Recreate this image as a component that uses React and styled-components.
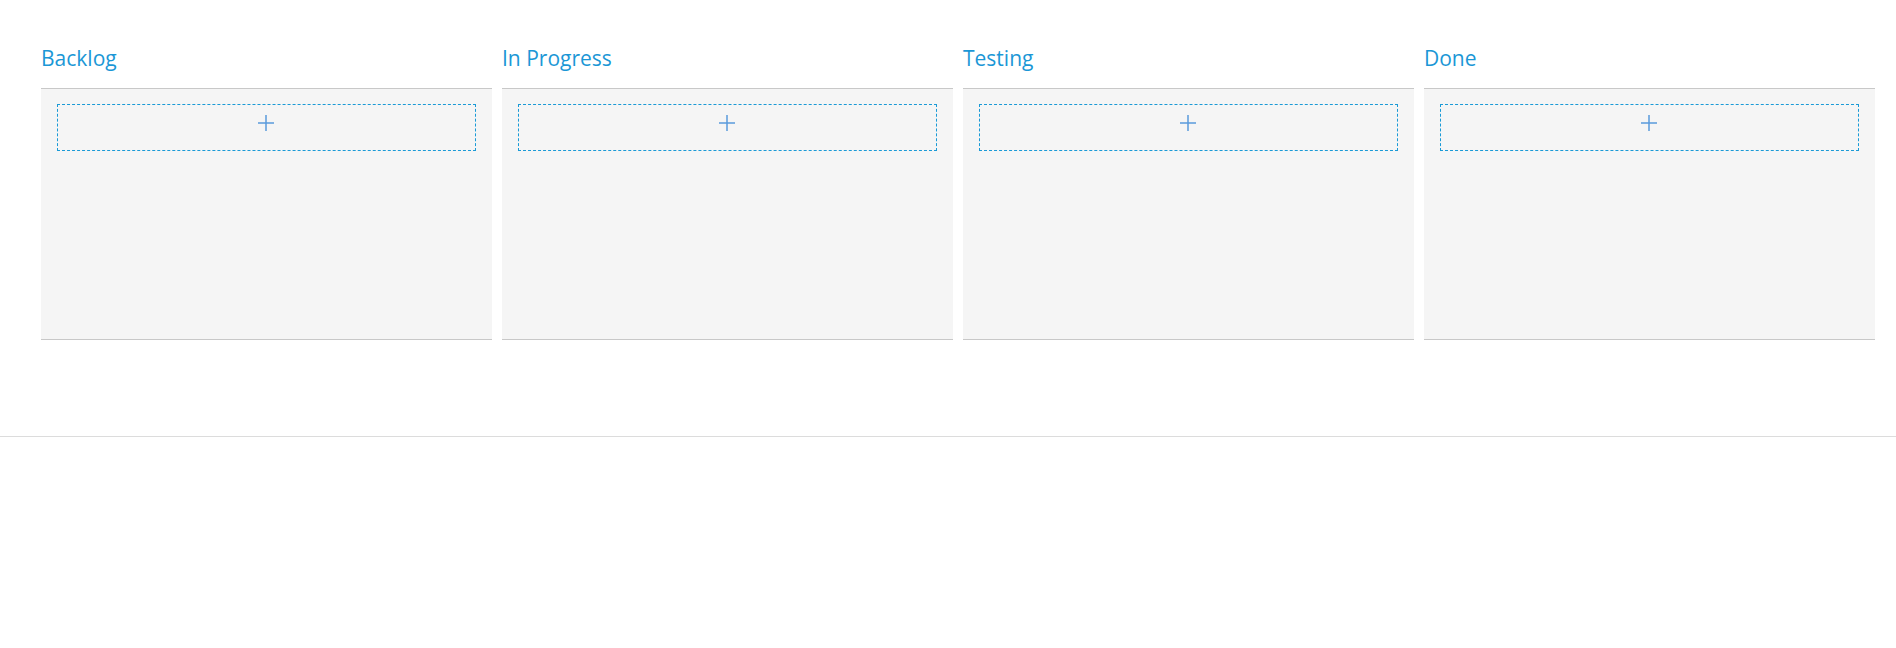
import styled, { createGlobalStyle } from "styled-components";

const GlobalStyle = createGlobalStyle`
  body {
    margin: 0;
    background: #ffffff;
    font-family: "Open Sans", "Noto Sans", sans-serif;
  }
`;

const columns = ["Backlog", "In Progress", "Testing", "Done"];

export default function App() {
  return (
    <>
      <GlobalStyle />
      <Page>
        <Board>
          {columns.map((name) => (
            <Column key={name}>
              <Title>{name}</Title>
              <Body>
                <AddCard>
                  <svg width="16" height="16" viewBox="0 0 16 16">
                    <path
                      d="M8 0v16M0 8h16"
                      stroke="#5a9bdc"
                      strokeWidth="1.5"
                      fill="none"
                    />
                  </svg>
                </AddCard>
              </Body>
            </Column>
          ))}
        </Board>
        <Divider />
      </Page>
    </>
  );
}

const Page = styled.div`
  width: 100%;
  height: 648px;
`;

const Board = styled.div`
  display: flex;
  gap: 10px;
  padding: 0 21px 0 41px;
  height: 436px;
  box-sizing: border-box;
`;

const Column = styled.div`
  flex: 1;
  display: flex;
  flex-direction: column;
`;

const Title = styled.div`
  height: 88px;
  box-sizing: border-box;
  padding-top: 44px;
  font-size: 21px;
  font-weight: 500;
  line-height: 28px;
  color: #1b97d6;
`;

const Body = styled.div`
  height: 252px;
  box-sizing: border-box;
  background: #f5f5f5;
  border-top: 1px solid #c8c8c8;
  border-bottom: 1px solid #c8c8c8;
  padding: 15px 16px;
`;

const AddCard = styled.div`
  height: 47px;
  box-sizing: border-box;
  border: 1px dashed #1a9ad6;
  display: flex;
  align-items: flex-start;
  justify-content: center;
  padding: 10px 2px 0 0;
  cursor: pointer;
`;

const Divider = styled.div`
  height: 1px;
  background: #dcdcdc;
`;
